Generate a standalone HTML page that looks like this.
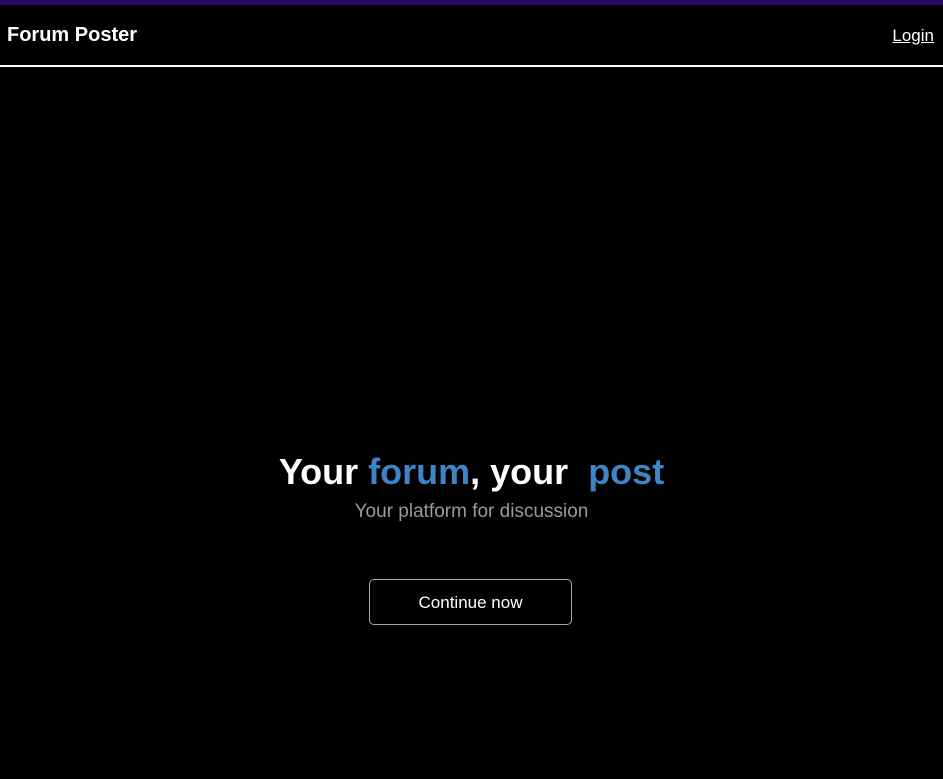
<!DOCTYPE html>
<html><head><style>
body{margin:0;background:#000;width:943px;height:779px;overflow:hidden;font-family:"Liberation Sans",sans-serif;position:relative}
.top{position:absolute;top:0;left:0;width:943px;height:5px;background:#230a5e}
.brand{position:absolute;left:7px;top:24px;color:#fff;font-weight:bold;font-size:20px}
.login{position:absolute;right:9px;top:26px;color:#fff;font-size:17px;text-decoration:underline}
.line{position:absolute;top:65px;left:0;width:943px;height:2px;background:#fff}
h1{position:absolute;top:451px;left:0;width:943px;text-align:center;margin:0;color:#fff;font-size:36px;font-weight:bold}
h1 span{color:#3d85c6}
.sub{position:absolute;top:501px;left:0;width:943px;text-align:center;color:#9a9a9a;font-size:19px}
.btn{position:absolute;left:369px;top:579px;width:201px;height:44px;border:1px solid #aaa;border-radius:5px;color:#fff;font-size:17px;line-height:46px;text-align:center;box-sizing:content-box}
</style></head><body>
<div class="top"></div>
<div class="brand">Forum Poster</div>
<div class="login">Login</div>
<div class="line"></div>
<h1>Your <span>forum</span>, your&nbsp; <span>post</span></h1>
<div class="sub">Your platform for discussion</div>
<div class="btn">Continue now</div>
</body></html>
